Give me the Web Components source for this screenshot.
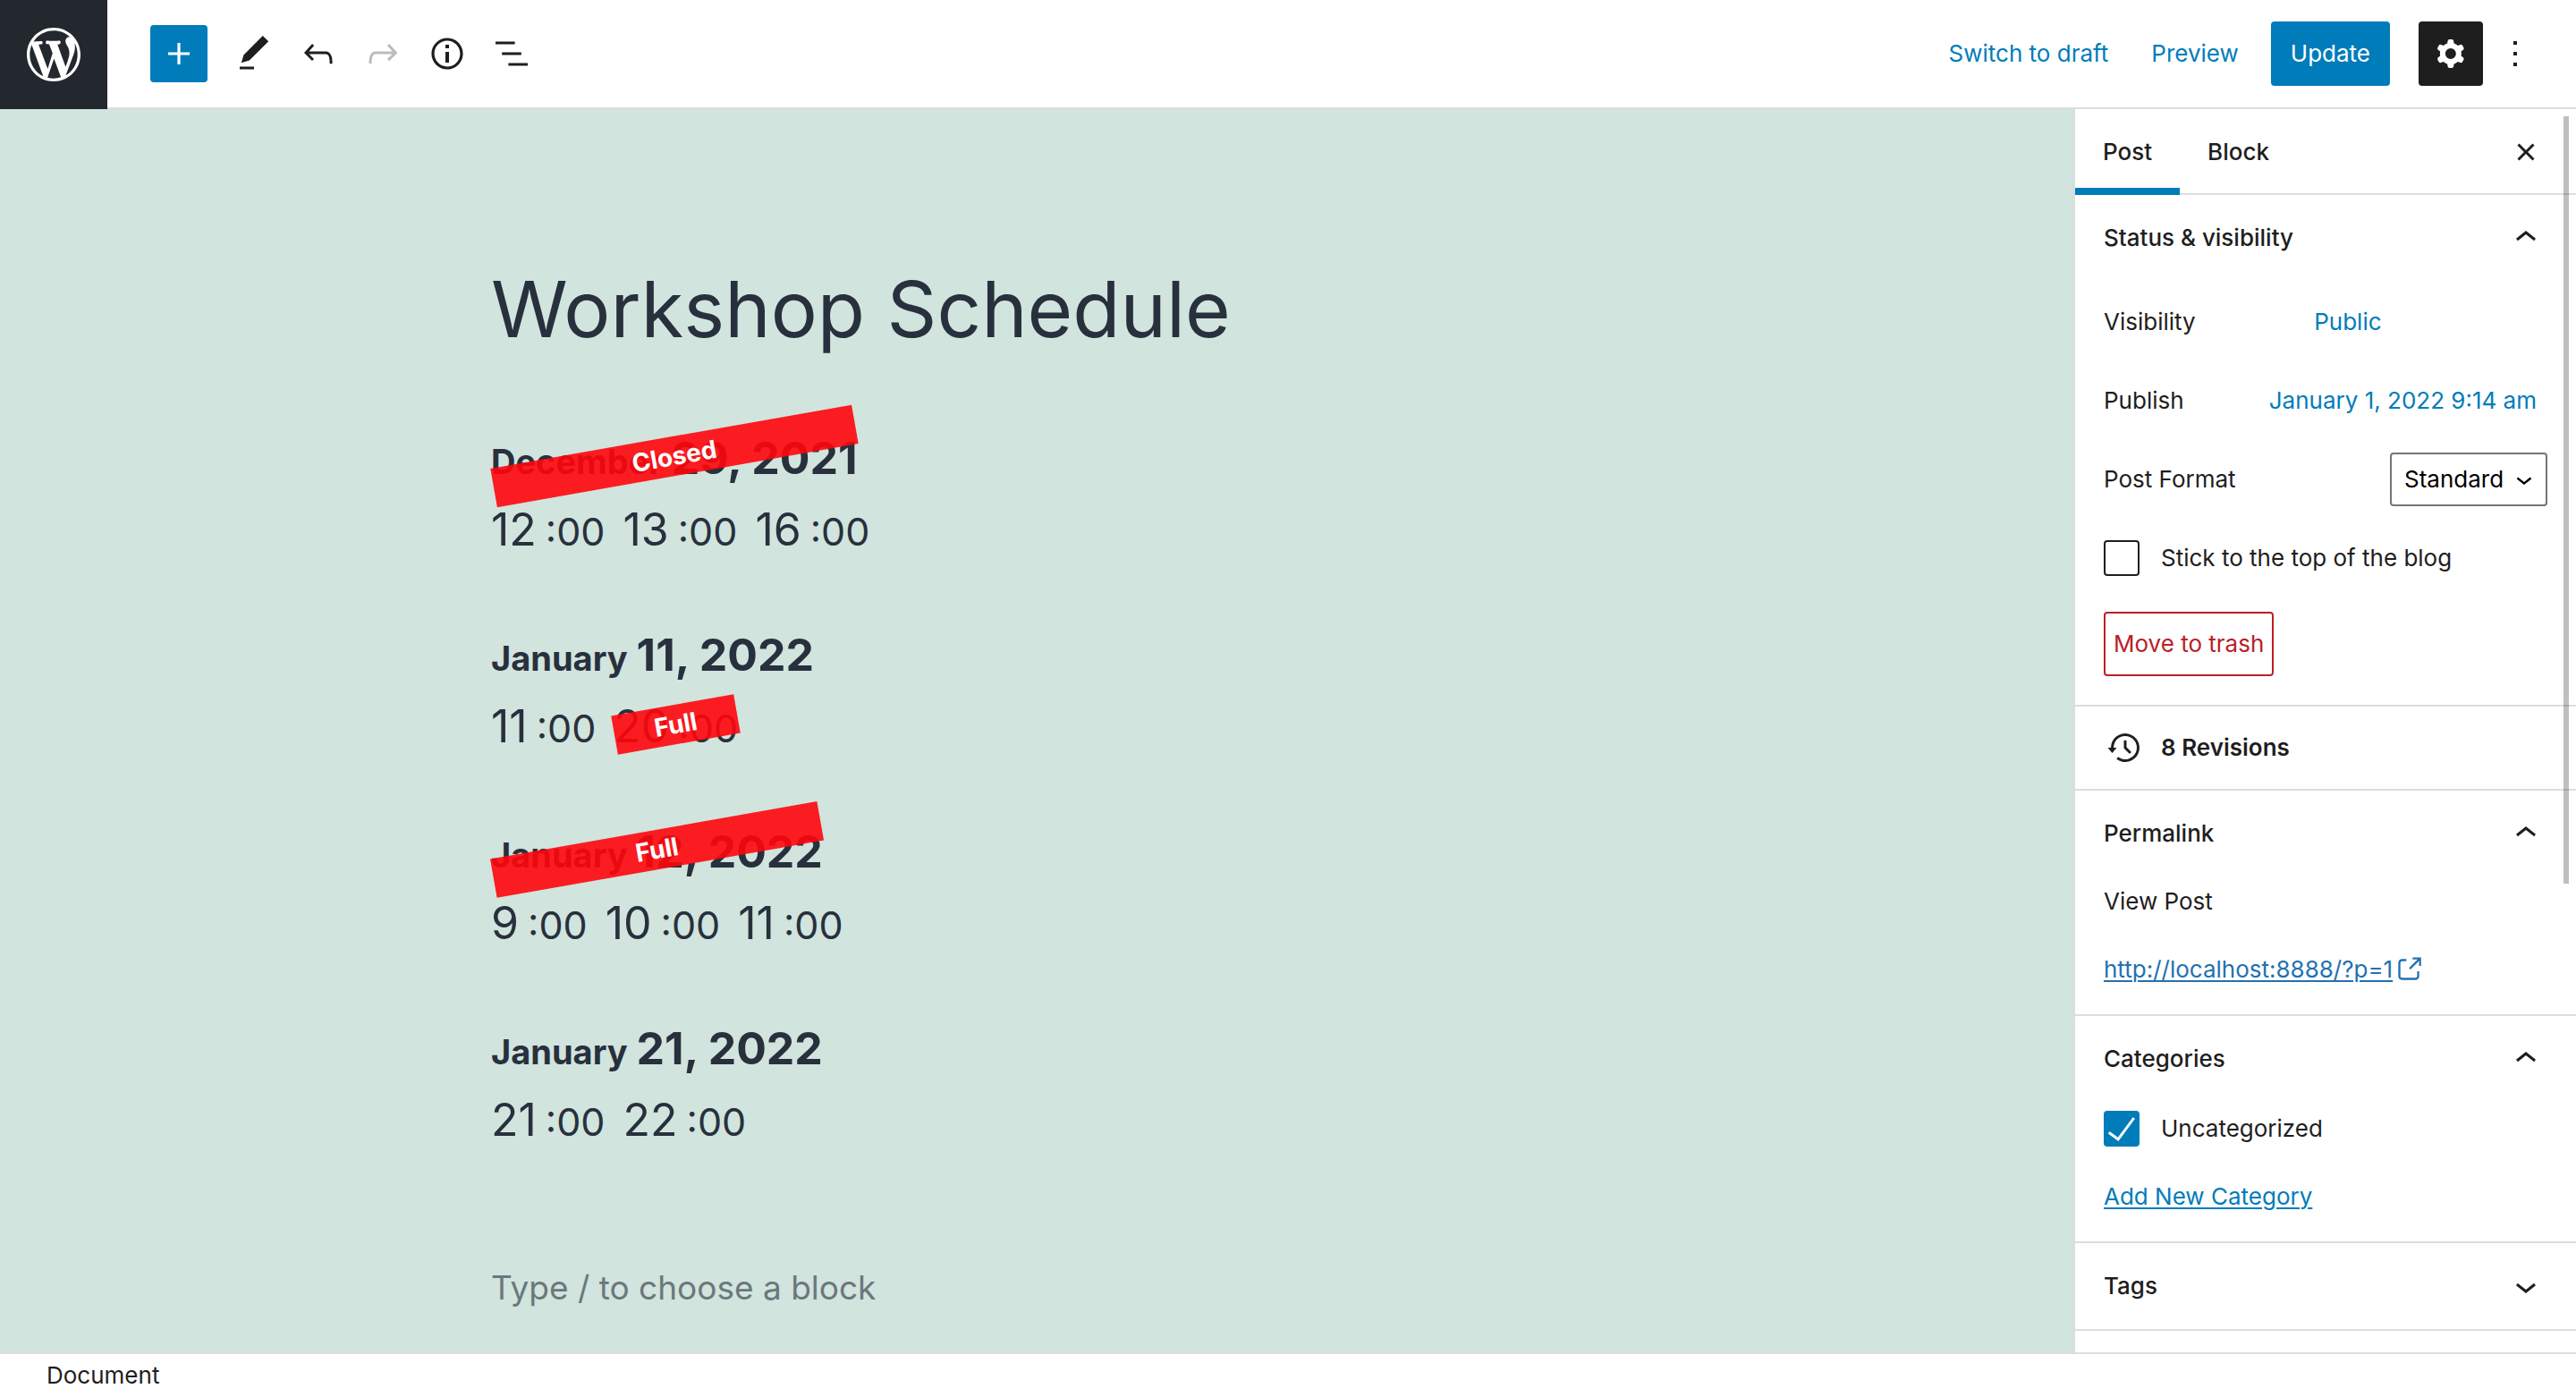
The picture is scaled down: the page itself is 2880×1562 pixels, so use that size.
<!DOCTYPE html>
<html lang="en">
<head>
<meta charset="utf-8">
<title>Workshop Schedule</title>
<style>
  html, body { margin: 0; height: 100%; }
  body {
    font: 400 26px/36px Inter, "Liberation Sans", sans-serif;
    color: #1e1e1e;
    background: #fff;
    --accent: #007cba;
    --line: #ddd;
    --ink: #1e1e1e;
    --danger: #bb2028;
  }
</style>
</head>
<body>
<editor-app>
  <editor-header slot="header"></editor-header>
  <editor-canvas slot="canvas">
    <span slot="title">Workshop Schedule</span>
    <schedule-day month="December" day="29, 2021" status="Closed">
      <schedule-time hour="12"></schedule-time>
      <schedule-time hour="13"></schedule-time>
      <schedule-time hour="16"></schedule-time>
    </schedule-day>
    <schedule-day month="January" day="11, 2022">
      <schedule-time hour="11"></schedule-time>
      <schedule-time hour="20" status="Full"></schedule-time>
    </schedule-day>
    <schedule-day month="January" day="12, 2022" status="Full">
      <schedule-time hour="9"></schedule-time>
      <schedule-time hour="10"></schedule-time>
      <schedule-time hour="11"></schedule-time>
    </schedule-day>
    <schedule-day month="January" day="21, 2022">
      <schedule-time hour="21"></schedule-time>
      <schedule-time hour="22"></schedule-time>
    </schedule-day>
  </editor-canvas>
  <settings-sidebar slot="sidebar"></settings-sidebar>
  <editor-footer slot="footer">Document</editor-footer>
</editor-app>

<script>
const ICONS = {
  wordpress: ['-2 -2 24 24', 'M20 10c0-5.51-4.49-10-10-10C4.48 0 0 4.49 0 10c0 5.52 4.48 10 10 10 5.51 0 10-4.48 10-10zM7.78 15.37L4.37 6.22c.55-.02 1.17-.08 1.17-.08.5-.06.44-1.13-.06-1.11 0 0-1.45.11-2.37.11-.18 0-.37 0-.58-.01C4.12 2.69 6.87 1.11 10 1.11c2.33 0 4.45.87 6.05 2.34-.68-.11-1.65.39-1.65 1.58 0 .74.45 1.36.9 2.1.35.61.55 1.36.55 2.46 0 1.49-1.4 5-1.4 5l-3.03-8.37c.54-.02.82-.17.82-.17.5-.05.44-1.25-.06-1.22 0 0-1.44.12-2.38.12-.87 0-2.33-.12-2.33-.12-.5-.03-.56 1.2-.06 1.22l.92.08 1.26 3.41zM17.41 10c.24-.64.74-1.87.43-4.25.7 1.29 1.05 2.71 1.05 4.25 0 3.29-1.73 6.24-4.4 7.78.97-2.59 1.94-5.2 2.92-7.78zM6.1 18.09C3.12 16.65 1.11 13.53 1.11 10c0-1.3.23-2.48.72-3.59C3.25 10.3 4.67 14.2 6.1 18.09zm4.03-6.63l2.58 6.98c-.86.29-1.76.45-2.71.45-.79 0-1.57-.11-2.29-.33.81-2.38 1.62-4.74 2.42-7.1z'],
  plus: ['0 0 24 24', 'M18 11.2h-5.2V6h-1.6v5.2H6v1.6h5.2V18h1.6v-5.2H18z'],
  edit: ['0 0 24 24', 'M20.1 5.1L16.9 2 6.2 12.7l-1.3 4.4 4.5-1.3L20.1 5.1zM4 20.8h8v-1.5H4v1.5z'],
  undo: ['0 0 24 24', 'M18.3 11.7c-.6-.6-1.4-.9-2.3-.9H6.7l2.9-3.3-1.1-1-4.5 5L8.5 16l1-1-2.7-2.7H16c.5 0 .9.2 1.3.5 1 1 1 3.4 1 4.5v.3h1.5v-.2c0-1.5 0-4.3-1.5-5.7z'],
  redo: ['0 0 24 24', 'M15.6 6.5l-1.1 1 2.9 3.3H8c-.9 0-1.7.3-2.3.9-1.4 1.5-1.4 4.2-1.4 5.6v.2h1.5v-.3c0-1.1 0-3.5 1-4.5.3-.3.7-.5 1.3-.5h9.2L14.5 15l1.1 1.1 4.6-4.6-4.6-5z'],
  info: ['0 0 24 24', 'M12 3.2c-4.8 0-8.8 3.9-8.8 8.8 0 4.8 3.9 8.8 8.8 8.8 4.8 0 8.8-3.9 8.8-8.8 0-4.8-4-8.8-8.8-8.8zm0 16c-4 0-7.2-3.3-7.2-7.2C4.8 8 8 4.8 12 4.8s7.2 3.3 7.2 7.2c0 4-3.2 7.2-7.2 7.2zM11 17h2v-6h-2v6zm0-8h2V7h-2v2z'],
  outline: ['0 0 24 24', 'M13.8 5.2H3v1.5h10.8V5.2zm-3.6 12v1.5H21v-1.5H10.2zm7.2-6H6.6v1.5h10.8v-1.5z'],
  cog: ['0 0 24 24', 'M10.289 4.836A1 1 0 0111.275 4h1.306a1 1 0 01.987.836l.244 1.466c.787.26 1.503.679 2.108 1.218l1.393-.522a1 1 0 011.216.437l.653 1.13a1 1 0 01-.23 1.273l-1.148.944a6.025 6.025 0 010 2.435l1.149.946a1 1 0 01.23 1.272l-.653 1.13a1 1 0 01-1.216.437l-1.394-.522c-.605.54-1.32.958-2.108 1.218l-.244 1.466a1 1 0 01-.987.836h-1.306a1 1 0 01-.986-.836l-.244-1.466a5.995 5.995 0 01-2.108-1.218l-1.394.522a1 1 0 01-1.217-.436l-.653-1.131a1 1 0 01.23-1.272l1.149-.946a6.026 6.026 0 010-2.435l-1.148-.944a1 1 0 01-.23-1.272l.653-1.131a1 1 0 011.217-.437l1.393.522a5.994 5.994 0 012.108-1.218l.244-1.466zM14.929 12a3 3 0 11-6 0 3 3 0 016 0z'],
  more: ['0 0 24 24', 'M13 19h-2v-2h2v2zm0-6h-2v-2h2v2zm0-6h-2V5h2v2z'],
  close: ['0 0 24 24', 'M12 13.06l3.712 3.713 1.061-1.06L13.061 12l3.712-3.712-1.06-1.06L12 10.938 8.288 7.227l-1.061 1.06L10.939 12l-3.712 3.712 1.06 1.061L12 13.061z'],
  up: ['0 0 24 24', 'M6.5 12.4L12 8l5.5 4.4-.9 1.2L12 10l-4.5 3.6-1-1.2z'],
  down: ['0 0 24 24', 'M17.5 11.6L12 16l-5.5-4.4.9-1.2L12 14l4.5-3.6 1 1.2z'],
  check: ['0 0 24 24', 'M18.3 5.6L9.9 16.9l-4.6-3.4-.9 1.2 5.8 4.3 9.3-12.6z'],
  backup: ['0 0 24 24', 'M5.5 12h1.75l-2.5 3-2.5-3H4a8 8 0 113.134 6.35l.907-1.194A6.5 6.5 0 105.5 12zm9.53 1.97l-2.28-2.28V8.5a.75.75 0 00-1.5 0V12a.747.747 0 00.218.529l1.282-.84-1.28.842 2.5 2.5a.75.75 0 101.06-1.061z'],
  external: ['0 0 24 24', 'M18.2 17c0 .7-.6 1.2-1.2 1.2H7c-.7 0-1.2-.6-1.2-1.2V7c0-.7.6-1.2 1.2-1.2h3.2V4.2H7C5.5 4.2 4.2 5.5 4.2 7v10c0 1.5 1.2 2.8 2.8 2.8h10c1.5 0 2.8-1.2 2.8-2.8v-3.6h-1.5V17zM14.9 3v1.5h3.7l-6.4 6.4 1.1 1.1 6.4-6.4v3.7h1.5V3h-6.3z']
};

const BASE = `
  *, :host { box-sizing: border-box; }
  button, select, input { font: inherit; color: inherit; margin: 0; padding: 0; border: 0; background: none; }
  button { cursor: pointer; white-space: nowrap; }
`;

/* Registers an element whose shadow root is filled by render(element). */
function define(name, render) {
  customElements.define(name, class extends HTMLElement {
    connectedCallback() {
      if (this.shadowRoot) return;
      const t = document.createElement('template');
      t.innerHTML = `<style>${BASE}</style>` + render(this);
      this.attachShadow({ mode: 'open' }).append(t.content.cloneNode(true));
    }
  });
}

define('wp-icon', el => {
  const [box, d] = ICONS[el.getAttribute('name')];
  return `
    <style>
      :host { display: block; flex: none; width: 48px; height: 48px; }
      :host([size="small"]) { width: 36px; height: 36px; }
      :host([size="large"]) { width: 72px; height: 72px; }
      svg { display: block; width: 100%; height: 100%; fill: currentColor; }
    </style>
    <svg viewBox="${box}" aria-hidden="true"><path fill-rule="evenodd" d="${d}"/></svg>`;
});

define('editor-app', () => `
  <style>
    :host { display: flex; flex-direction: column; height: 100vh; overflow: hidden; }
    main { flex: 1; display: flex; min-height: 0; }
    slot[name="canvas"]::slotted(*) { flex: 1; }
  </style>
  <slot name="header"></slot>
  <main><slot name="canvas"></slot><slot name="sidebar"></slot></main>
  <slot name="footer"></slot>`);

define('editor-header', () => `
  <style>
    :host { display: block; flex: none; }
    header { display: flex; align-items: stretch; justify-content: space-between; height: 122px; }
    .home { display: grid; place-items: center; width: 120px; background: #23282e; color: #fff; }
    .start { display: flex; }
    .tools, .actions { display: flex; align-items: center; border-bottom: 2px solid var(--line); }
    .tools { padding-left: 48px; }
    .actions { flex: 1; justify-content: flex-end; padding-right: 32px; }
    .tool { display: grid; place-items: center; width: 72px; height: 72px; }
    .tool:disabled { color: #bbb; }
    .insert { display: grid; place-items: center; width: 64px; height: 64px; margin-right: 16px; border-radius: 4px; background: var(--accent); color: #fff; }
    .link { height: 72px; padding: 0 24px; color: var(--accent); }
    .update { height: 72px; margin-left: 12px; padding: 0 22px; border-radius: 4px; background: var(--accent); color: #fff; }
    .settings { margin-left: 32px; border-radius: 4px; background: var(--ink); color: #fff; }
  </style>
  <header>
    <div class="start">
      <a class="home" href="#" aria-label="View posts"><wp-icon name="wordpress" size="large"></wp-icon></a>
      <div class="tools">
        <button class="insert" aria-label="Add block"><wp-icon name="plus"></wp-icon></button>
        <button class="tool" aria-label="Tools"><wp-icon name="edit"></wp-icon></button>
        <button class="tool" aria-label="Undo"><wp-icon name="undo"></wp-icon></button>
        <button class="tool" aria-label="Redo" disabled><wp-icon name="redo"></wp-icon></button>
        <button class="tool" aria-label="Details"><wp-icon name="info"></wp-icon></button>
        <button class="tool" aria-label="Outline"><wp-icon name="outline"></wp-icon></button>
      </div>
    </div>
    <div class="actions">
      <button class="link">Switch to draft</button>
      <button class="link">Preview</button>
      <button class="update">Update</button>
      <button class="tool settings" aria-label="Settings"><wp-icon name="cog"></wp-icon></button>
      <button class="tool" aria-label="Options"><wp-icon name="more"></wp-icon></button>
    </div>
  </header>`);

define('editor-canvas', () => `
  <style>
    :host { display: block; min-width: 0; padding: 164px 40px 0; overflow: hidden; background: #d1e4dd; color: #28303d; }
    .column { display: flex; flex-direction: column; max-width: 1220px; margin: 0 auto; }
    h1 { margin: 0 0 66px; font-size: 87px; line-height: 120px; font-weight: 400; }
    .days { display: flex; flex-direction: column; gap: 60px; }
    input { width: 100%; height: 60px; margin-top: 118px; font-size: 37px; line-height: 60px; outline: 0; }
    input::placeholder { color: #28303d; opacity: .6; }
  </style>
  <div class="column">
    <h1><slot name="title"></slot></h1>
    <div class="days"><slot></slot></div>
    <input type="text" aria-label="Add block" placeholder="Type / to choose a block">
  </div>`);

define('status-ribbon', () => `
  <style>
    :host {
      position: absolute; left: 0; right: 0; top: 50%; height: 44px; margin-top: -24px;
      display: block; transform: rotate(-10deg); background: rgba(255, 5, 12, .9);
      color: #fff; font-size: 28px; line-height: 44px; font-weight: 700; text-align: center;
    }
  </style>
  <slot></slot>`);

const ribbon = el => el.hasAttribute('status')
  ? `<status-ribbon>${el.getAttribute('status')}</status-ribbon>` : '';

define('schedule-day', el => `
  <style>
    :host { display: block; line-height: 80px; }
    h2 { position: relative; display: flex; align-items: baseline; gap: 10px; width: max-content; margin: 0; font-size: 50px; font-weight: 700; }
    .month { font-size: 38px; line-height: 60px; }
    .times { display: flex; gap: 20px; }
  </style>
  <h2><span class="month">${el.getAttribute('month')}</span><span>${el.getAttribute('day')}</span>${ribbon(el)}</h2>
  <div class="times"><slot></slot></div>`);

define('schedule-time', el => `
  <style>
    :host { position: relative; display: flex; align-items: baseline; gap: 10px; font-size: 50px; }
    .minutes { font-size: 43px; line-height: 60px; }
  </style>
  <span>${el.getAttribute('hour')}</span><span class="minutes">:00</span>${ribbon(el)}`);

define('settings-panel', el => `
  <style>
    :host { display: block; border-bottom: 2px solid var(--line); }
    h2 { margin: 0; font-size: 26px; line-height: 36px; }
    button { display: flex; align-items: center; justify-content: space-between; width: 100%; height: 96px; padding: 0 32px; font-weight: 500; text-align: left; }
    .body { padding: 10px 32px 32px; }
  </style>
  <h2><button aria-expanded="${el.hasAttribute('open')}">${el.getAttribute('heading')}<wp-icon name="${el.hasAttribute('open') ? 'up' : 'down'}"></wp-icon></button></h2>
  ${el.hasAttribute('open') ? '<div class="body"><slot></slot></div>' : ''}`);

define('setting-row', el => `
  <style>
    :host { display: flex; align-items: center; height: 72px; }
    span { flex: 0 1 45%; white-space: nowrap; }
    button { padding: 0 12px; color: var(--accent); }
  </style>
  <span>${el.getAttribute('label')}</span><button>${el.getAttribute('value')}</button>`);

define('select-row', el => `
  <style>
    :host { display: flex; align-items: center; justify-content: space-between; height: 72px; }
    .box { display: grid; align-items: center; justify-items: end; color: #000; }
    .box > * { grid-area: 1 / 1; }
    select { appearance: none; width: 176px; height: 60px; padding: 0 40px 0 14px; border: 2px solid #757575; border-radius: 4px; background: #fff; }
    wp-icon { margin-right: 8px; pointer-events: none; }
  </style>
  <label for="field">${el.getAttribute('label')}</label>
  <div class="box"><select id="field"><option>${el.getAttribute('value')}</option></select><wp-icon name="down" size="small"></wp-icon></div>`);

define('check-field', el => `
  <style>
    :host { display: flex; align-items: center; gap: 24px; }
    .box { display: grid; place-items: center; width: 40px; height: 40px; color: #fff; }
    .box > * { grid-area: 1 / 1; }
    input { appearance: none; width: 40px; height: 40px; border: 2px solid var(--ink); border-radius: 4px; background: #fff; }
    input:checked { border-color: var(--accent); background: var(--accent); }
    wp-icon { margin: -4px; pointer-events: none; }
  </style>
  <span class="box"><input type="checkbox" id="field"${el.hasAttribute('checked') ? ' checked' : ''}>${el.hasAttribute('checked') ? '<wp-icon name="check"></wp-icon>' : ''}</span>
  <label for="field"><slot></slot></label>`);

define('settings-sidebar', () => `
  <style>
    :host { position: relative; display: block; flex: none; width: 562px; border-left: 2px solid var(--line); background: #fff; overflow: hidden; }
    .tabs { display: flex; height: 96px; border-bottom: 2px solid var(--line); }
    .tab { height: 96px; padding: 0 31px; font-weight: 500; }
    .tab[aria-selected="true"] { box-shadow: inset 0 -8px var(--accent); }
    .close { display: grid; place-items: center; width: 72px; height: 96px; margin-left: auto; margin-right: 20px; }
    .status { display: flex; flex-direction: column; gap: 16px; }
    .status check-field { height: 72px; }
    .trash { align-self: flex-start; height: 72px; margin-top: 8px; padding: 0 9px; border: 2px solid var(--danger); border-radius: 4px; color: var(--danger); }
    .revisions { display: flex; align-items: center; gap: 16px; width: 100%; height: 94px; padding: 0 32px; border-bottom: 2px solid var(--line); font-weight: 600; }
    .stack { display: flex; flex-direction: column; align-items: flex-start; gap: 40px; }
    .terms { gap: 38px; }
    .permalink { display: flex; align-items: center; color: #2271b1; text-decoration: none; }
    .permalink span, .add { text-decoration: underline; text-decoration-thickness: 2px; text-underline-offset: 3px; }
    .add { color: var(--accent); }
    .thumb { position: absolute; top: 8px; right: 8px; width: 6px; height: 858px; background: rgba(0, 0, 0, .25); }
  </style>
  <div class="tabs" role="tablist">
    <button class="tab" role="tab" aria-selected="true">Post</button>
    <button class="tab" role="tab" aria-selected="false">Block</button>
    <button class="close" aria-label="Close settings"><wp-icon name="close"></wp-icon></button>
  </div>
  <settings-panel heading="Status &amp;amp; visibility" open>
    <div class="status">
      <setting-row label="Visibility" value="Public"></setting-row>
      <setting-row label="Publish" value="January 1, 2022 9:14 am"></setting-row>
      <select-row label="Post Format" value="Standard"></select-row>
      <check-field>Stick to the top of the blog</check-field>
      <button class="trash">Move to trash</button>
    </div>
  </settings-panel>
  <button class="revisions"><wp-icon name="backup"></wp-icon>8 Revisions</button>
  <settings-panel heading="Permalink" open>
    <div class="stack">
      <span>View Post</span>
      <a class="permalink" href="#"><span>http://localhost:8888/?p=1</span><wp-icon name="external" size="small"></wp-icon></a>
    </div>
  </settings-panel>
  <settings-panel heading="Categories" open>
    <div class="stack terms">
      <check-field checked>Uncategorized</check-field>
      <button class="add">Add New Category</button>
    </div>
  </settings-panel>
  <settings-panel heading="Tags"></settings-panel>
  <div class="thumb"></div>`);

define('editor-footer', () => `
  <style>
    :host { display: flex; align-items: center; flex: none; height: 50px; padding: 0 52px; border-top: 2px solid var(--line); background: #fff; }
  </style>
  <slot></slot>`);
</script>
</body>
</html>
